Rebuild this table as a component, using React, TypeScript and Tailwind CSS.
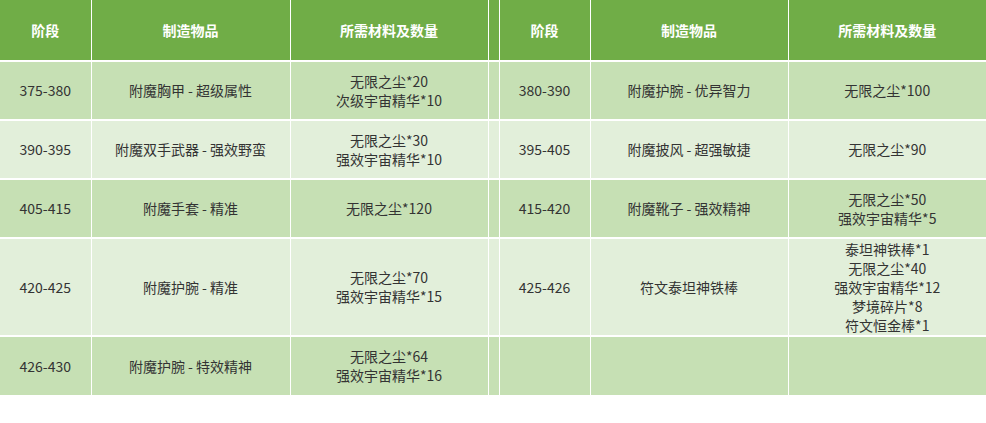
import * as React from 'react'

type Side = { stage: string; item: string; mats: string[] }

const rows: { left: Side; right: Side | null; h: string }[] = [
  {
    left: { stage: '375-380', item: '附魔胸甲 - 超级属性', mats: ['无限之尘*20', '次级宇宙精华*10'] },
    right: { stage: '380-390', item: '附魔护腕 - 优异智力', mats: ['无限之尘*100'] },
    h: 'h-[59px]',
  },
  {
    left: { stage: '390-395', item: '附魔双手武器 - 强效野蛮', mats: ['无限之尘*30', '强效宇宙精华*10'] },
    right: { stage: '395-405', item: '附魔披风 - 超强敏捷', mats: ['无限之尘*90'] },
    h: 'h-[59px]',
  },
  {
    left: { stage: '405-415', item: '附魔手套 - 精准', mats: ['无限之尘*120'] },
    right: { stage: '415-420', item: '附魔靴子 - 强效精神', mats: ['无限之尘*50', '强效宇宙精华*5'] },
    h: 'h-[59px]',
  },
  {
    left: { stage: '420-425', item: '附魔护腕 - 精准', mats: ['无限之尘*70', '强效宇宙精华*15'] },
    right: {
      stage: '425-426',
      item: '符文泰坦神铁棒',
      mats: ['泰坦神铁棒*1', '无限之尘*40', '强效宇宙精华*12', '梦境碎片*8', '符文恒金棒*1'],
    },
    h: 'h-[98px]',
  },
  {
    left: { stage: '426-430', item: '附魔护腕 - 特效精神', mats: ['无限之尘*64', '强效宇宙精华*16'] },
    right: null,
    h: 'h-[59px]',
  },
]

const heads = ['阶段', '制造物品', '所需材料及数量']

function SideCells({ side, last }: { side: Side | null; last?: boolean }) {
  return (
    <>
      <td className="border-r border-white">{side?.stage}</td>
      <td className="border-r border-white">{side?.item}</td>
      <td className={last ? '' : 'border-r border-white'}>
        {side?.mats.map((m) => (
          <div key={m}>{m}</div>
        ))}
      </td>
    </>
  )
}

export default function App() {
  return (
    <div
      className="min-h-screen bg-white text-[14px] leading-[19px] text-[#333]"
      style={{ fontFamily: '"Noto Sans CJK SC", "Noto Sans", sans-serif' }}
    >
      <table className="w-[986px] table-fixed border-collapse text-center">
        <colgroup>
          <col className="w-[91px]" />
          <col className="w-[199px]" />
          <col className="w-[198px]" />
          <col className="w-[11px]" />
          <col className="w-[91px]" />
          <col className="w-[198px]" />
          <col className="w-[198px]" />
        </colgroup>
        <thead>
          <tr className="h-[61px] border-b-2 border-white bg-[#70ad47] text-white">
            {heads.map((h) => (
              <th key={'l' + h} className="border-r border-white font-bold">
                {h}
              </th>
            ))}
            <th className="border-r border-white" />
            {heads.map((h, i) => (
              <th key={'r' + h} className={i < 2 ? 'border-r border-white font-bold' : 'font-bold'}>
                {h}
              </th>
            ))}
          </tr>
        </thead>
        <tbody>
          {rows.map((r, i) => (
            <tr
              key={r.left.stage}
              className={
                r.h +
                (i % 2 === 0 ? ' bg-[#c6e0b4]' : ' bg-[#e2efda]') +
                (i < rows.length - 1 ? ' border-b-2 border-white' : '')
              }
            >
              <SideCells side={r.left} />
              <td className="border-r border-white" />
              <SideCells side={r.right} last />
            </tr>
          ))}
        </tbody>
      </table>
    </div>
  )
}
